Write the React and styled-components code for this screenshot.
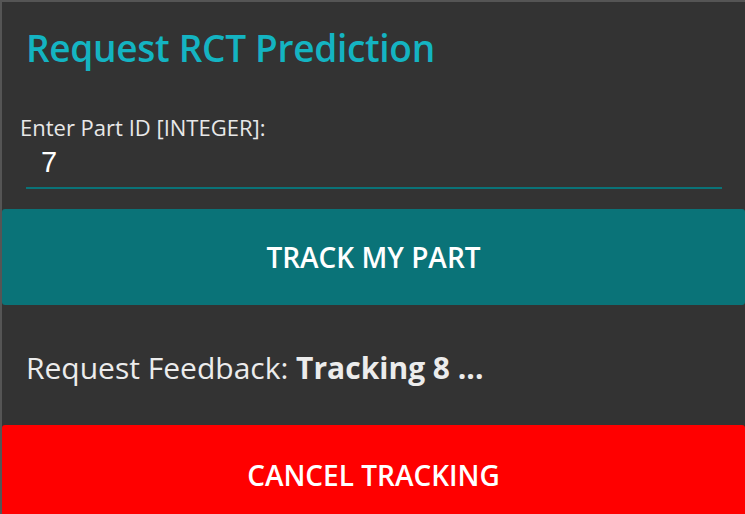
import React from "react";
import styled, { createGlobalStyle } from "styled-components";

const Global = createGlobalStyle`
  html, body { margin: 0; padding: 0; background: #333333; }
  body { font-family: "Open Sans", "Noto Sans", sans-serif; overflow: hidden; }
`;

const Window = styled.div`
  box-sizing: border-box;
  width: 745px;
  height: 514px;
  background: #333333;
  border-top: 2px solid #555555;
  border-left: 2px solid #555555;
  display: flex;
  flex-direction: column;
  overflow: hidden;
`;

const Title = styled.h1`
  margin: 0;
  padding: 21px 0 0 24px;
  font-size: 37px;
  font-weight: 600;
  letter-spacing: -0.3px;
  color: #14b4c2;
  line-height: 50px;
`;

const Field = styled.div`
  display: flex;
  flex-direction: column;
  padding: 40px 21px 0 18px;
`;

const Label = styled.label`
  font-size: 22px;
  color: #e8e8e8;
  line-height: 28px;
`;

const Input = styled.input`
  margin: 0 0 0 6px;
  width: 696px;
  height: 48px;
  box-sizing: border-box;
  background: transparent;
  border: none;
  border-bottom: 2px solid #0a7378;
  color: #ffffff;
  font-family: "Liberation Sans", Arial, sans-serif;
  font-size: 29px;
  padding: 0 0 4px 15px;
  outline: none;
`;

const Button = styled.button`
  display: flex;
  align-items: center;
  justify-content: center;
  width: 743px;
  height: ${(p) => p.$h}px;
  margin-top: ${(p) => p.$mt}px;
  border: none;
  border-radius: 3px;
  background: ${(p) => p.$bg};
  color: #ffffff;
  font-family: "Open Sans", sans-serif;
  font-weight: 600;
  font-size: 28px;
  flex-shrink: 0;
  padding: 0;
`;

const Feedback = styled.p`
  margin: 43px 0 0 24px;
  font-size: 30px;
  line-height: 40px;
  color: #ececec;
  height: 40px;
  strong { font-weight: 700; }
`;

export default function App() {
  return (
    <>
      <Global />
      <Window>
        <Title>Request RCT Prediction</Title>
        <Field>
          <Label>Enter Part ID [INTEGER]:</Label>
          <Input defaultValue="7" />
        </Field>
        <Button $bg="#0a7378" $h={96} $mt={20}>TRACK MY PART</Button>
        <Feedback>
          Request Feedback: <strong>Tracking 8 ...</strong>
        </Feedback>
        <Button $bg="#ff0000" $h={100} $mt={37}>CANCEL TRACKING</Button>
      </Window>
    </>
  );
}
